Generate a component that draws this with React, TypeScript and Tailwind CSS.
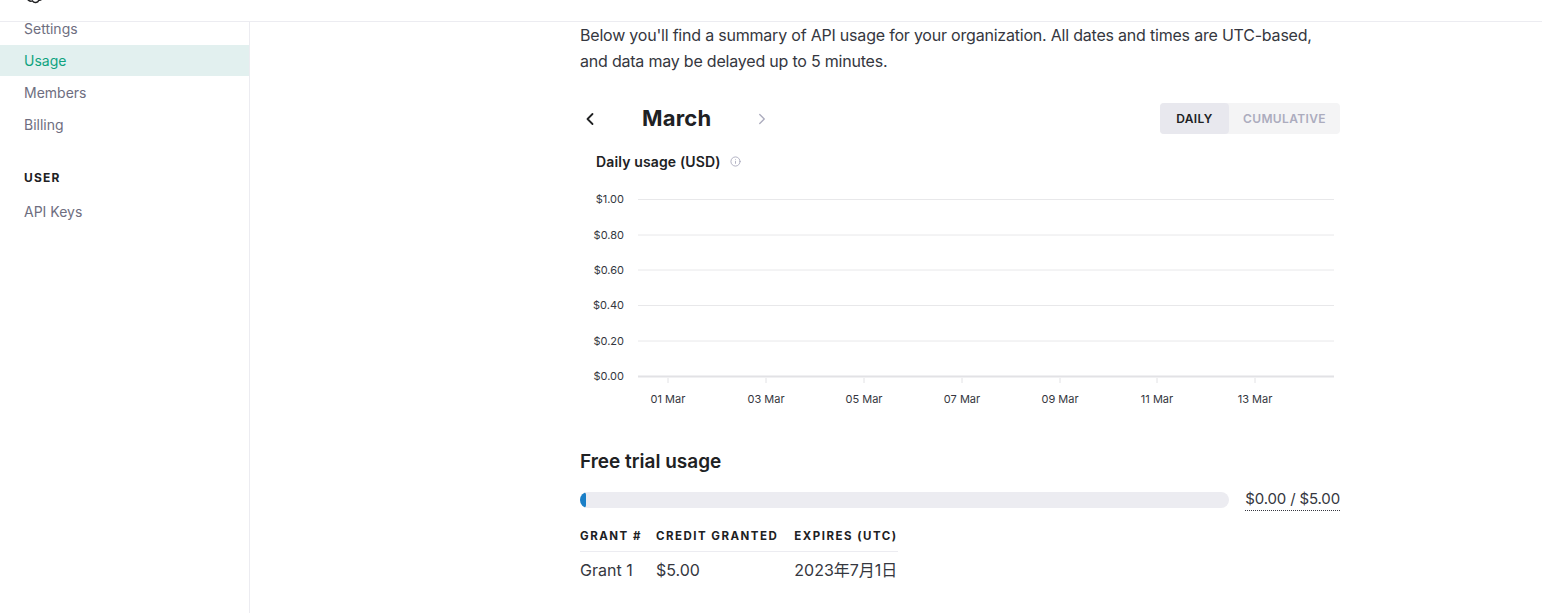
import { ChevronLeft, ChevronRight, Info } from 'lucide-react'

const sideItems = ['Settings', 'Usage', 'Members', 'Billing']
const yLabels = ['$1.00', '$0.80', '$0.60', '$0.40', '$0.20', '$0.00']
const xLabels = ['01 Mar', '03 Mar', '05 Mar', '07 Mar', '09 Mar', '11 Mar', '13 Mar']

function OpenAILogo() {
  return (
    <svg width="22" height="22" viewBox="0 0 24 24" fill="none" stroke="#202123" strokeWidth="1.6">
      <path d="M12 3.5a4 4 0 0 1 6.6 3.2 4 4 0 0 1 1.8 6.6 4 4 0 0 1-4.2 5.4 4 4 0 0 1-7 .8 4 4 0 0 1-5.6-4.2 4 4 0 0 1-.4-6.8A4 4 0 0 1 12 3.5z" />
      <path d="M9 8.5l5 2.9v5.8M15 8.5l-5 2.9" />
    </svg>
  )
}

function UsageChart() {
  // chart frame in local coords (origin = content left 580)
  const gridY = [15.5, 51, 86, 121.5, 157, 192.5]
  const tickX = [88, 186, 284, 382, 480, 577, 675]
  return (
    <svg width="760" height="232" className="block">
      {gridY.map((y, i) => (
        <g key={i}>
          <text x="44" y={y + 3.5} textAnchor="end" fontSize="11" fill="#353740" fontFamily="Inter, sans-serif">
            {yLabels[i]}
          </text>
          <line
            x1="58"
            x2="754"
            y1={y}
            y2={y}
            stroke={i === gridY.length - 1 ? '#e2e2e5' : '#e8e8ea'}
            strokeWidth={i === gridY.length - 1 ? 2 : 1}
          />
        </g>
      ))}
      {tickX.map((x, i) => (
        <g key={x}>
          <line x1={x} x2={x} y1="194" y2="199" stroke="#e2e2e5" strokeWidth="1" />
          <text x={x} y="219" textAnchor="middle" fontSize="11" fill="#353740" fontFamily="Inter, sans-serif">
            {xLabels[i]}
          </text>
        </g>
      ))}
    </svg>
  )
}

export default function App() {
  return (
    <div className="w-[1542px] h-[613px] overflow-hidden bg-white text-[#353740] flex flex-col" style={{ fontFamily: 'Inter, "Noto Sans CJK JP", sans-serif' }}>
      {/* Header */}
      <div className="h-[22px] shrink-0 border-b border-[#ececf1] overflow-hidden flex items-end pl-[24px]">
        <div className="mb-[16px]">
          <OpenAILogo />
        </div>
      </div>

      <div className="flex flex-1 min-h-0">
        {/* Sidebar */}
        <div className="w-[250px] shrink-0 border-r border-[#ececf1] overflow-hidden">
          <div className="-mt-[10px]">
            {sideItems.map((item) => (
              <div
                key={item}
                className={`flex items-center pl-[24px] text-[14px] ${
                  item === 'Usage' ? 'bg-[#e2f0ef] text-[#10a37f] mt-[1px] h-[31px]' : 'h-[32px] text-[#6e6e80]'
                }`}
              >
                {item}
              </div>
            ))}
            <div className="mt-[28px] pl-[24px] text-[12px] font-bold tracking-[0.1em] text-[#202123] h-[20px] flex items-center">
              USER
            </div>
            <div className="mt-[7px] h-[32px] flex items-center pl-[24px] text-[14px] text-[#6e6e80]">API Keys</div>
          </div>
        </div>

        {/* Main */}
        <div className="flex-1 pl-[330px]">
          <div className="w-[760px]">
            <p className="text-[16px] leading-[26px] tracking-[-0.013em] text-[#353740]">
              Below you'll find a summary of API usage for your organization. All dates and times are UTC-based,
              and data may be delayed up to 5 minutes.
            </p>

            <div className="mt-[29px] flex items-center justify-between h-[31px]">
              <div className="flex items-center">
                <ChevronLeft className="w-[20px] h-[20px] text-[#202123]" strokeWidth={2.2} />
                <div className="ml-[42px] text-[22px] font-bold text-[#202123] tracking-[0.01em]">March</div>
                <ChevronRight className="w-[18px] h-[18px] text-[#acacbe] ml-[42px]" strokeWidth={1.8} />
              </div>
              <div className="flex h-[31px] rounded-[4px] bg-[#f4f4f5] text-[12px] font-semibold tracking-[0.03em]">
                <div className="w-[69px] flex items-center justify-center rounded-[4px] bg-[#e8e8ee] text-[#202123]">
                  DAILY
                </div>
                <div className="w-[111px] flex items-center justify-center text-[#acacbe]">CUMULATIVE</div>
              </div>
            </div>

            <div className="mt-[17px] pl-[16px] flex items-center gap-[9px] h-[20px]">
              <span className="text-[14px] font-semibold text-[#202123] tracking-[0.01em]">Daily usage (USD)</span>
              <Info className="w-[11px] h-[11px] text-[#acacbe]" strokeWidth={2} />
            </div>

            <div className="mt-[13px]">
              <UsageChart />
            </div>

            <h2 className="mt-[33px] text-[19px] font-semibold text-[#202123] leading-[26px]">Free trial usage</h2>

            <div className="mt-[13px] flex items-center gap-[16px]">
              <div className="flex-1 h-[16px] rounded-full bg-[#ececf1] overflow-hidden">
                <div className="w-[6px] h-full rounded-full bg-[#1a7fc7]" />
              </div>
              <span className="text-[15px] tracking-[-0.01em] text-[#353740] border-b border-dotted border-[#353740] leading-[22px]">
                $0.00 / $5.00
              </span>
            </div>

            <table className="mt-[17px] border-collapse">
              <thead>
                <tr className="border-b border-[#ececf1]">
                  <th className="text-left pr-[14px] pb-[7px] pt-0 text-[11.5px] font-bold tracking-[0.13em] text-[#202123] leading-[16px]">
                    GRANT #
                  </th>
                  <th className="text-left pr-[16px] pb-[7px] text-[11.5px] font-bold tracking-[0.13em] text-[#202123] leading-[16px]">
                    CREDIT GRANTED
                  </th>
                  <th className="text-left pb-[7px] text-[11.5px] font-bold tracking-[0.13em] text-[#202123] leading-[16px]">
                    EXPIRES (UTC)
                  </th>
                </tr>
              </thead>
              <tbody>
                <tr>
                  <td className="pt-[6px] pr-[14px] text-[16px] text-[#353740]">Grant 1</td>
                  <td className="pt-[6px] pr-[16px] text-[16px] text-[#353740]">$5.00</td>
                  <td className="pt-[6px] text-[16px] text-[#353740]">2023年7月1日</td>
                </tr>
              </tbody>
            </table>
          </div>
        </div>
      </div>
    </div>
  )
}
